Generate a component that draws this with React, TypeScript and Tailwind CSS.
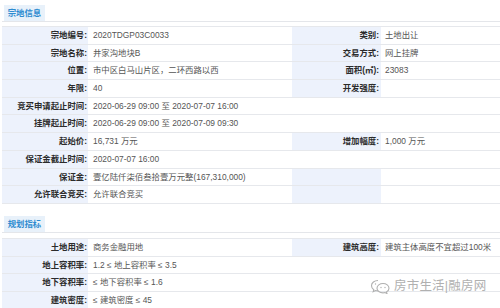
import React from 'react';

type Cell = { label?: string; value?: string; span?: boolean };
type Row = [Cell, Cell?];

const font = { fontFamily: '"Liberation Sans", "Noto Sans CJK SC", sans-serif' };

const infoRows: Row[] = [
    [{ label: '宗地编号', value: '2020TDGP03C0033' }, { label: '类别', value: '土地出让' }],
    [{ label: '宗地名称', value: '井家沟地块B' }, { label: '交易方式', value: '网上挂牌' }],
    [{ label: '位置', value: '市中区白马山片区，二环西路以西' }, { label: '面积(㎡)', value: '23083' }],
    [{ label: '年限', value: '40' }, { label: '开发强度', value: '' }],
    [{ label: '竞买申请起止时间', value: '2020-06-29 09:00 至 2020-07-07 16:00', span: true }],
    [{ label: '挂牌起止时间', value: '2020-06-29 09:00 至 2020-07-09 09:30', span: true }],
    [{ label: '起始价', value: '16,731 万元' }, { label: '增加幅度', value: '1,000 万元' }],
    [{ label: '保证金截止时间', value: '2020-07-07 16:00', span: true }],
    [{ label: '保证金', value: '壹亿陆仟柒佰叁拾壹万元整(167,310,000)' }, {}],
    [{ label: '允许联合竞买', value: '允许联合竞买' }, {}],
];

const planRows: Row[] = [
    [{ label: '土地用途', value: '商务金融用地' }, { label: '建筑高度', value: '建筑主体高度不宜超过100米' }],
    [{ label: '地上容积率', value: '1.2 ≤ 地上容积率 ≤ 3.5', span: true }],
    [{ label: '地下容积率', value: '≤ 地下容积率 ≤ 1.6', span: true }],
    [{ label: '建筑密度', value: '≤ 建筑密度 ≤ 45', span: true }],
];

const Label: React.FC<{ text?: string; second?: boolean }> = ({ text, second }) => (
    <div className={`bg-[#edf2fc] text-right font-bold text-[#2b2b2b] whitespace-nowrap ${second ? 'pr-[2px]' : 'pr-[1px]'}`}>
        {text ? `${text}:` : ''}
    </div>
);

const Value: React.FC<{ text?: string; span?: boolean; second?: boolean }> = ({ text, span, second }) => (
    <div className={`text-[#555] whitespace-nowrap ${second ? 'pl-[4px]' : 'pl-[5px]'} ${span ? 'col-span-3' : ''}`}>
        {text}
    </div>
);

const Table: React.FC<{ rows: Row[] }> = ({ rows }) => (
    <div className="border-t border-[#e6e8ec]">
        {rows.map(([a, b], i) => (
            <div
                key={i}
                className="grid grid-cols-[86px_204px_89px_1fr] h-[17.7px] items-center leading-[16.7px] border-b border-[#e6e8ec] [&>div]:h-full"
            >
                <Label text={a.label} />
                <Value text={a.value} span={a.span} />
                {!a.span && (
                    <>
                        <Label text={b?.label} second />
                        <Value text={b?.value} second />
                    </>
                )}
            </div>
        ))}
    </div>
);

const SectionTab: React.FC<{ title: string }> = ({ title }) => (
    <div className="border-b border-[#e4e6ea] pl-[2px]">
        <div className="w-[41px] h-[16px] bg-[#e8f1fa] text-[#2e8bd0] font-bold text-[8.4px] leading-[16px] text-center">
            {title}
        </div>
    </div>
);

const App: React.FC = () => {
    return (
        <div className="relative w-[500px] h-[308px] overflow-hidden bg-white pl-[2px] pt-[5px] text-[8.4px]" style={font}>
            <SectionTab title="宗地信息" />
            <div className="mt-[4px]">
                <Table rows={infoRows} />
            </div>

            <div className="mt-[12px]">
                <SectionTab title="规划指标" />
            </div>
            <div className="mt-[5px]">
                <Table rows={planRows} />
            </div>

            {/* watermark */}
            <div className="absolute left-[369px] top-[278px] flex items-center gap-[2px] text-[#b0b0b0]">
                <svg width="23" height="16" viewBox="0 0 23 16" fill="none" stroke="#b0b0b0" strokeWidth="1.1">
                    <path d="M9 2.5c-3.6 0-6.5 2.3-6.5 5.2 0 1.6.9 3 2.3 4l-.6 2 2.3-1.2c.8.2 1.6.4 2.5.4" />
                    <path d="M14 5.5c-3.3 0-6 2.1-6 4.7s2.7 4.7 6 4.7c.7 0 1.4-.1 2-.3l2 1-.5-1.7c1.5-.9 2.5-2.2 2.5-3.7 0-2.6-2.7-4.7-6-4.7z" />
                    <circle cx="6.5" cy="6" r=".7" fill="#b0b0b0" stroke="none" />
                    <circle cx="12" cy="9.5" r=".7" fill="#b0b0b0" stroke="none" />
                    <circle cx="16" cy="9.5" r=".7" fill="#b0b0b0" stroke="none" />
                </svg>
                <span className="text-[12.5px] leading-[16px] tracking-[0.2px]">房市生活|融房网</span>
            </div>
        </div>
    );
};

export default App;
